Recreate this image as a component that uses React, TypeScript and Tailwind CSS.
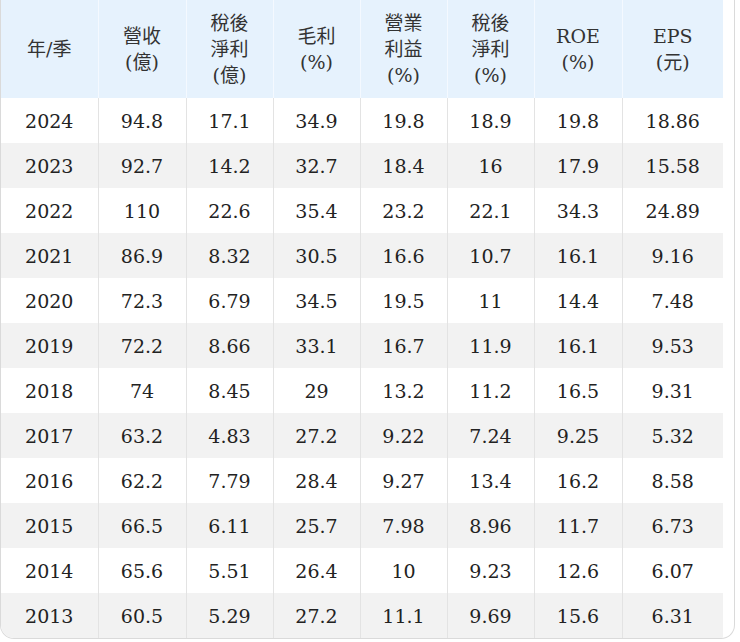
import React from "react";

const headers: string[][] = [
  ["年/季"],
  ["營收", "(億)"],
  ["稅後", "淨利", "(億)"],
  ["毛利", "(%)"],
  ["營業", "利益", "(%)"],
  ["稅後", "淨利", "(%)"],
  ["ROE", "(%)"],
  ["EPS", "(元)"],
];

const rows: string[][] = [
  ["2024", "94.8", "17.1", "34.9", "19.8", "18.9", "19.8", "18.86"],
  ["2023", "92.7", "14.2", "32.7", "18.4", "16", "17.9", "15.58"],
  ["2022", "110", "22.6", "35.4", "23.2", "22.1", "34.3", "24.89"],
  ["2021", "86.9", "8.32", "30.5", "16.6", "10.7", "16.1", "9.16"],
  ["2020", "72.3", "6.79", "34.5", "19.5", "11", "14.4", "7.48"],
  ["2019", "72.2", "8.66", "33.1", "16.7", "11.9", "16.1", "9.53"],
  ["2018", "74", "8.45", "29", "13.2", "11.2", "16.5", "9.31"],
  ["2017", "63.2", "4.83", "27.2", "9.22", "7.24", "9.25", "5.32"],
  ["2016", "62.2", "7.79", "28.4", "9.27", "13.4", "16.2", "8.58"],
  ["2015", "66.5", "6.11", "25.7", "7.98", "8.96", "11.7", "6.73"],
  ["2014", "65.6", "5.51", "26.4", "10", "9.23", "12.6", "6.07"],
  ["2013", "60.5", "5.29", "27.2", "11.1", "9.69", "15.6", "6.31"],
];

const widths = ["w-[97px]", "w-[88px]", "w-[87px]", "w-[87px]", "w-[87px]", "w-[87px]", "w-[88px]", "w-[101px]"];

export default function App() {
  return (
    <div className="w-[740px] h-[642px] bg-white">
      <div
        className="w-[735px] border-x border-b border-[#dadada] rounded-b-[14px] overflow-hidden bg-white"
        style={{ fontFamily: '"DejaVu Serif", "Noto Sans CJK TC", serif' }}
      >
        <table className="w-[722px] border-collapse table-fixed text-[#222]">
          <thead>
            <tr className="bg-[#e6f2fd] h-[98px]">
              {headers.map((h, i) => (
                <th
                  key={i}
                  className={`${widths[i]} font-normal text-[19px] leading-[26px] text-[#333] text-center align-middle border-l border-[#f4f9ff] first:border-l-0`}
                >
                  {h.map((l, j) => (
                    <div key={j}>{l}</div>
                  ))}
                </th>
              ))}
            </tr>
          </thead>
          <tbody>
            {rows.map((r, i) => (
              <tr key={i} className={`h-[45px] ${i % 2 === 1 ? "bg-[#f2f2f2]" : "bg-white"}`}>
                {r.map((c, j) => (
                  <td
                    key={j}
                    className="text-center align-middle text-[19px] leading-[26px] border-l border-[#e3e3e3] first:border-l-0"
                  >
                    {c}
                  </td>
                ))}
              </tr>
            ))}
          </tbody>
        </table>
      </div>
    </div>
  );
}
